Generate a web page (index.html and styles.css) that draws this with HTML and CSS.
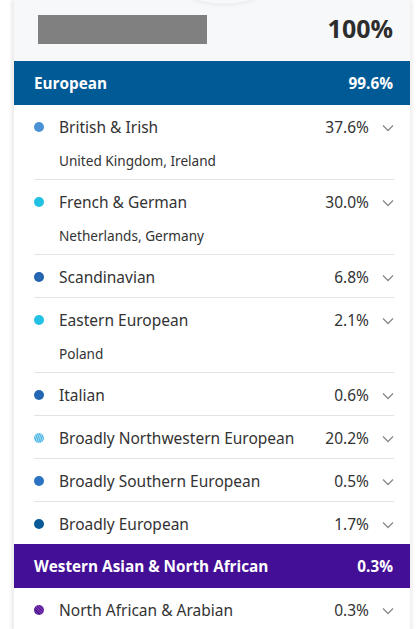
FILE: index.html
```html
<!DOCTYPE html>
<html>
<head>
<meta charset="utf-8">
<link rel="stylesheet" href="styles.css">
</head>
<body>
<div class="page">
  <div class="card">
    <div class="summary">
      <div class="arc"></div>
      <div class="redacted"></div>
      <div class="total">100%</div>
    </div>

    <div class="group group-eu"><span>European</span><span>99.6%</span></div>
    <ul class="rows">
      <li class="row first"><div class="line"><i class="dot d-brit"></i><span class="name">British &amp; Irish</span><span class="pct">37.6%</span><svg class="chev" viewBox="0 0 12 8"><path d="M1 1.5 L6 6.5 L11 1.5"/></svg></div><div class="sub">United Kingdom, Ireland</div></li>
      <li class="row"><div class="line"><i class="dot d-fr"></i><span class="name">French &amp; German</span><span class="pct">30.0%</span><svg class="chev" viewBox="0 0 12 8"><path d="M1 1.5 L6 6.5 L11 1.5"/></svg></div><div class="sub">Netherlands, Germany</div></li>
      <li class="row"><div class="line"><i class="dot d-sc"></i><span class="name">Scandinavian</span><span class="pct">6.8%</span><svg class="chev" viewBox="0 0 12 8"><path d="M1 1.5 L6 6.5 L11 1.5"/></svg></div></li>
      <li class="row"><div class="line"><i class="dot d-fr"></i><span class="name">Eastern European</span><span class="pct">2.1%</span><svg class="chev" viewBox="0 0 12 8"><path d="M1 1.5 L6 6.5 L11 1.5"/></svg></div><div class="sub">Poland</div></li>
      <li class="row"><div class="line"><i class="dot d-it"></i><span class="name">Italian</span><span class="pct">0.6%</span><svg class="chev" viewBox="0 0 12 8"><path d="M1 1.5 L6 6.5 L11 1.5"/></svg></div></li>
      <li class="row"><div class="line"><i class="dot d-bnw"></i><span class="name">Broadly Northwestern European</span><span class="pct">20.2%</span><svg class="chev" viewBox="0 0 12 8"><path d="M1 1.5 L6 6.5 L11 1.5"/></svg></div></li>
      <li class="row"><div class="line"><i class="dot d-bse"></i><span class="name">Broadly Southern European</span><span class="pct">0.5%</span><svg class="chev" viewBox="0 0 12 8"><path d="M1 1.5 L6 6.5 L11 1.5"/></svg></div></li>
      <li class="row last"><div class="line"><i class="dot d-be"></i><span class="name">Broadly European</span><span class="pct">1.7%</span><svg class="chev" viewBox="0 0 12 8"><path d="M1 1.5 L6 6.5 L11 1.5"/></svg></div></li>
    </ul>

    <div class="group group-wa"><span>Western Asian &amp; North African</span><span>0.3%</span></div>
    <ul class="rows">
      <li class="row last first"><div class="line"><i class="dot d-naa"></i><span class="name">North African &amp; Arabian</span><span class="pct">0.3%</span><svg class="chev" viewBox="0 0 12 8"><path d="M1 1.5 L6 6.5 L11 1.5"/></svg></div></li>
    </ul>
  </div>
</div>
</body>
</html>
```

FILE: styles.css
```css
* { box-sizing: border-box; }
html, body { margin: 0; padding: 0; background: #ffffff; }
body { font-family: "Noto Sans", "Open Sans", sans-serif; color: #333333; }

.page { padding-left: 14px; width: 417px; height: 629px; overflow: hidden; }

.card {
  width: 396px;
  background: #ffffff;
  box-shadow: -3px 0 3px rgba(0,0,0,0.07), 3px 0 3px rgba(0,0,0,0.06);
}

.summary {
  position: relative;
  height: 61px;
  background: #f7f8fa;
  display: flex;
  align-items: center;
  justify-content: space-between;
  padding: 0 17px 0 24px;
  overflow: hidden;
}
.arc {
  position: absolute;
  left: 150px;
  top: -76px;
  width: 120px;
  height: 80px;
  border-radius: 50%;
  box-shadow: 0 1px 4px rgba(0,0,0,0.08);
  background: #f7f8fa;
}
.redacted {
  position: relative;
  width: 169px;
  height: 29px;
  background: #808080;
  margin-top: -2px;
}
.total {
  position: relative;
  font-family: "Open Sans", "Noto Sans", sans-serif;
  font-weight: 700;
  font-size: 25px;
  color: #2d2d2d;
  margin-top: -5px;
}

.group {
  height: 44px;
  display: flex;
  align-items: center;
  justify-content: space-between;
  padding: 0 17px 0 20px;
  color: #ffffff;
  font-family: "Open Sans", "Noto Sans", sans-serif;
  font-weight: 700;
  font-size: 15.3px;
}
.group-eu { background: #005a96; }
.group-wa { background: #430f96; }

.rows { list-style: none; margin: 0; padding: 0 16px 0 20px; }
.row {
  padding: 11px 0 9px;
  border-bottom: 1px solid #e3e3e3;
}
.row.first { padding-top: 11px; }
.row.last { border-bottom: none; }
.line {
  display: flex;
  align-items: center;
  height: 22px;
  font-size: 15.5px;
}
.dot {
  width: 10px;
  height: 10px;
  border-radius: 50%;
  flex: none;
  margin-right: 15px;
}
.name { flex: 1; white-space: nowrap; }
.pct { margin-right: 13px; }
.chev { width: 12px; height: 8px; flex: none; margin-top: 2px; }
.chev path { fill: none; stroke: #8a8a8a; stroke-width: 1.3; }
.sub {
  font-size: 13.6px;
  line-height: 18px;
  margin: 14px 0 0 25px;
}

.d-brit { background: #4a92d4; }
.d-fr { background: #22c0e2; }
.d-sc { background: radial-gradient(circle, #2c6cb8 0, #1a5aa6 100%); }
.d-it { background: repeating-linear-gradient(60deg, #1c5fa8 0 1px, #2a70bb 1px 2px); }
.d-bnw { background: repeating-linear-gradient(70deg, #56b9e6 0 1px, #8fd3f0 1px 2px); }
.d-bse { background: #2b73c2; }
.d-be { background: #0b5a98; }
.d-naa { background: repeating-linear-gradient(45deg, #4a1a90 0 1px, #7a30b0 1px 2px); }
```
